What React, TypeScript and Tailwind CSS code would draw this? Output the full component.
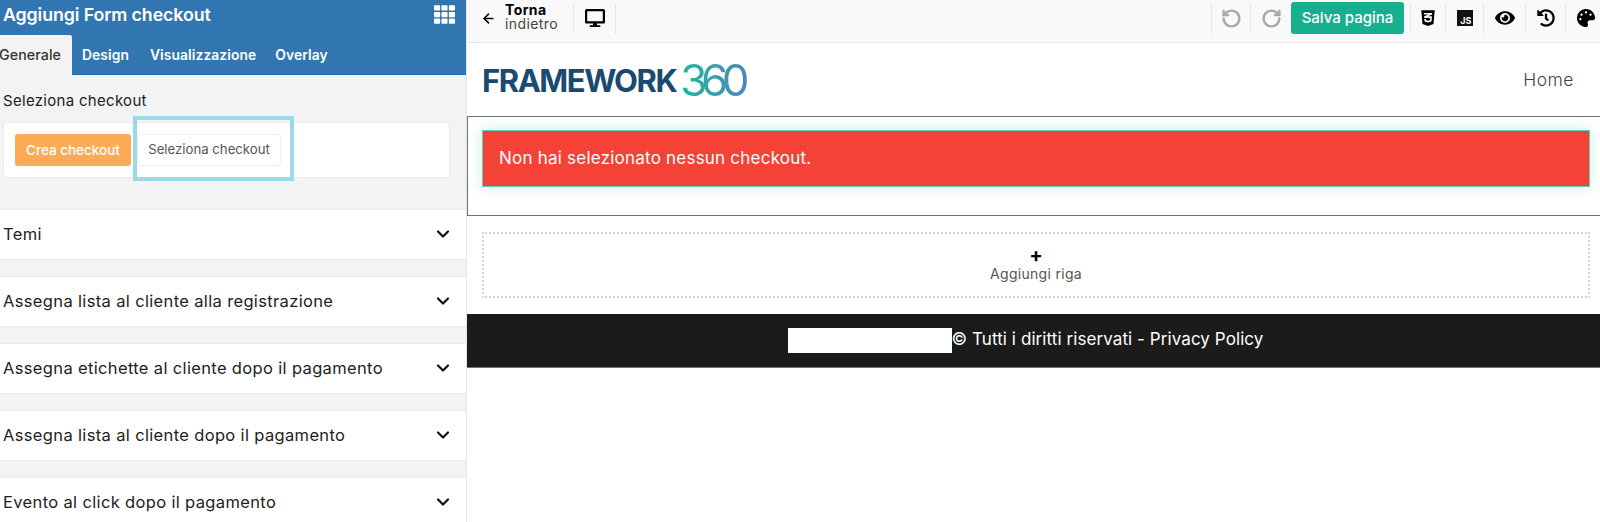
import { ArrowLeft, ChevronDown, RotateCcw, RotateCw } from "lucide-react";
import { FaCss3Alt, FaDesktop, FaEye, FaHistory, FaPalette, FaTh } from "react-icons/fa";

const sections = [
  "Temi",
  "Assegna lista al cliente alla registrazione",
  "Assegna etichette al cliente dopo il pagamento",
  "Assegna lista al cliente dopo il pagamento",
  "Evento al click dopo il pagamento",
];

function Sidebar() {
  return (
    <aside className="w-[467px] shrink-0 h-[522px] overflow-hidden bg-[#f3f3f3] border-r border-[#e6e6e6]">
      {/* Header and tabs */}
      <div className="bg-[#3276b1] border-b border-[#1f6fb5] h-[75px] text-white">
        <div className="h-[35px] pl-[3px] pr-[11px] flex items-center justify-between">
          <span className="text-[17.8px] font-semibold tracking-[-0.1px] leading-none mt-[-6px]">Aggiungi Form checkout</span>
          <FaTh className="w-[21px] h-[21px] mt-[-6px]" />
        </div>
        <div className="flex h-[40px] text-[13.8px] font-semibold tracking-[0.1px] items-center">
          <div className="w-[72px] h-[40px] bg-[#f3f3f3] text-[#333] text-[14.2px] font-medium flex items-center justify-end pr-[11px] rounded-tr-[2px] overflow-hidden whitespace-nowrap">
            Generale
          </div>
          <div className="ml-[10px]">Design</div>
          <div className="ml-[21px]">Visualizzazione</div>
          <div className="ml-[19px]">Overlay</div>
        </div>
      </div>

      <div className="pt-[17px] h-[134px]">
        <div className="pl-[3px] text-[15px] leading-[18px] text-[#222] tracking-[0.3px]">Seleziona checkout</div>
        <div className="relative ml-[3px] mt-[12px] w-[447px] h-[56px] bg-white border border-[#ebebeb] flex items-center pl-[11px] gap-[6px]">
          <div className="w-[116px] h-[32px] rounded-[3px] bg-[#fbaa55] text-white text-[13.5px] font-medium flex items-center justify-center">
            Crea checkout
          </div>
          <div className="w-[144px] h-[32px] rounded-[3px] bg-white border border-[#eeeeee] text-[#555] text-[13.2px] flex items-center justify-center">
            Seleziona checkout
          </div>
          {/* Highlight frame drawn on top of the screenshot */}
          <div className="absolute left-[129px] top-[-7px] w-[161px] h-[65px] border-[4px] border-[#9bd8e8]" />
        </div>
      </div>

      <div className="flex flex-col gap-[16px]">
        {sections.map((s) => (
          <div
            key={s}
            className="h-[51px] shrink-0 bg-white border-y border-[#e9e9e9] flex items-center justify-between pl-[3px] pr-[13px] pb-[1px]"
          >
            <span className="text-[16.5px] text-[#222] tracking-[0.35px]">{s}</span>
            <ChevronDown className="w-[20px] h-[20px] text-[#111]" strokeWidth={2.6} />
          </div>
        ))}
      </div>
    </aside>
  );
}

function Sep() {
  return <div className="w-px h-[31px] bg-[#e6e6e6] shrink-0" />;
}

function Toolbar() {
  return (
    <div className="h-[43px] shrink-0 bg-[#f9f9f9] border-b border-[#e5e5e5] flex items-start justify-between pt-[2px]">
      <div className="flex items-center h-[32px]">
        <ArrowLeft className="ml-[14px] w-[15px] h-[15px] text-black" strokeWidth={2.4} />
        <div className="ml-[9px] w-[68px] text-[14px] leading-[14px] tracking-[0.4px] mt-[-2px]">
          <div className="font-bold text-black">Torna</div>
          <div className="text-[#444]">indietro</div>
        </div>
        <Sep />
        <div className="w-[41px] flex justify-center"><FaDesktop className="w-[20px] h-[18px] text-black" /></div>
        <Sep />
      </div>
      <div className="flex items-center h-[32px]">
        <Sep />
        <div className="w-[38px] flex justify-center"><RotateCcw className="w-[21px] h-[21px] text-[#a8a8a8]" strokeWidth={2.8} /></div>
        <Sep />
        <div className="w-[40px] flex justify-center"><RotateCw className="w-[21px] h-[21px] text-[#a8a8a8]" strokeWidth={2.8} /></div>
        <div className="w-[113px] h-[32px] rounded-[3px] bg-[#17b08f] text-white text-[15px] font-medium flex items-center justify-center">
          Salva pagina
        </div>
        <div className="ml-[6px]"><Sep /></div>
        <div className="w-[34px] flex justify-center"><FaCss3Alt className="w-[16px] h-[18px] text-black" /></div>
        <Sep />
        <div className="w-[37px] flex justify-center">
          <div className="w-[16px] h-[16px] bg-[#111] text-white text-[9px] font-bold leading-[10px] flex items-end justify-end pr-[1px]">JS</div>
        </div>
        <Sep />
        <div className="w-[41px] flex justify-center"><FaEye className="w-[20px] h-[18px] text-black" /></div>
        <Sep />
        <div className="w-[39px] flex justify-center"><FaHistory className="w-[18px] h-[18px] text-black" /></div>
        <Sep />
        <div className="w-[34px] pl-[11px]"><FaPalette className="w-[18px] h-[18px] text-black" /></div>
      </div>
    </div>
  );
}

export default function App() {
  return (
    <div className="flex w-[1600px] h-[522px] overflow-hidden bg-white font-['Inter','Liberation_Sans',sans-serif]">
      <Sidebar />
      <main className="flex-1 flex flex-col min-w-0">
        <Toolbar />

        {/* Page header with logo */}
        <div className="h-[73px] shrink-0 flex items-center justify-between pl-[15px] pr-[26px]">
          <div className="flex items-center">
            <span className="text-[31px] font-bold text-[#1a4a72] tracking-[-1.45px] leading-none mt-[2px]">FRAMEWORK</span>
            <span className="ml-[4px] pr-[8px] text-[44px] font-normal tracking-[-6.5px] leading-none text-transparent bg-clip-text bg-gradient-to-r from-[#17b79a] to-[#4a83bd]">360</span>
          </div>
          <span className="text-[17.5px] font-light text-[#444] tracking-[0.5px] mt-[1px]">Home</span>
        </div>

        {/* Selected block */}
        <div className="h-[100px] shrink-0 border-y border-l border-[#6f7579] pl-[14px] pr-[10px] pt-[13px]">
          <div className="h-[57px] bg-[#f44336] border border-[#5fd0bb] shadow-[0_0_12px_rgba(95,208,187,0.35)] flex items-center pl-[16px] text-white text-[17px] tracking-[0.22px]">
            Non hai selezionato nessun checkout.
          </div>
        </div>

        <div className="ml-[15px] mr-[10px] mt-[16px] h-[66px] shrink-0 border-2 border-dotted border-[#d4d4d4] flex flex-col items-center justify-center pb-[3px]">
          <span className="text-[20px] font-bold leading-[20px] text-black">+</span>
          <span className="text-[14px] text-[#555] leading-[18px] tracking-[0.3px]">Aggiungi riga</span>
        </div>

        <footer className="mt-[16px] h-[54px] shrink-0 bg-[#1b1b1b] border-b border-[#6f7579] flex items-center justify-center text-white text-[17px] tracking-[0.08px] pr-[16px] pb-[1px]">
          <span className="w-[164px] h-[25px] bg-white" />
          <span>© Tutti i diritti riservati - Privacy Policy</span>
        </footer>
      </main>
    </div>
  );
}
